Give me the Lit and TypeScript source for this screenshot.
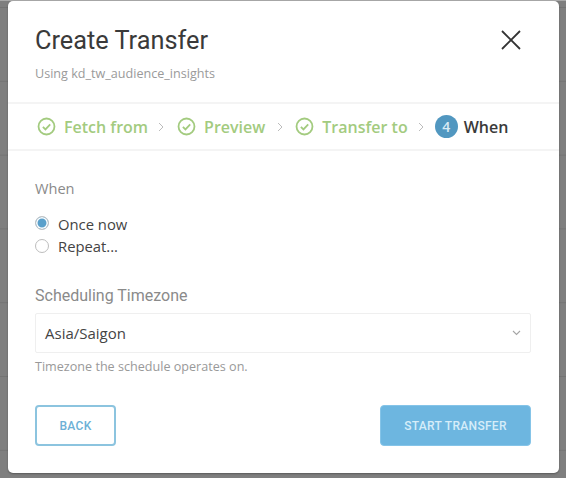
import { LitElement, html, css } from "lit";
import { customElement } from "lit/decorators.js";

const check = html`<svg class="ck" viewBox="0 0 20 20" width="19" height="19"><circle cx="10" cy="10" r="8.4" fill="none" stroke="#a3cb7f" stroke-width="1.9"/><path d="M6.2 10.3l2.7 2.7 5-5.2" fill="none" stroke="#a3cb7f" stroke-width="1.9"/></svg>`;
const chevron = html`<svg viewBox="0 0 6 10" width="6" height="10"><path d="M1 1l4 4-4 4" fill="none" stroke="#bcbcbc" stroke-width="1"/></svg>`;

@customElement("app-root")
export class AppRoot extends LitElement {
  static styles = css`
    :host { display: block; width: 566px; height: 478px; overflow: hidden; font-family: "Open Sans", sans-serif; }
    .backdrop { height: 478px; box-sizing: border-box; padding: 1px 7px 0 8px; background-color: #7f7f7f; background-image: linear-gradient(#a9a9a9 0 1px, transparent 1px), linear-gradient(#747474 0 1px, transparent 1px); background-size: auto, 100% 73.8px; background-position: 0 0, 0 7px; }
    .modal { background: #fff; height: 472px; width: 551px; border-radius: 5px; box-shadow: 0 1px 2px rgba(0,0,0,.3); display: flex; flex-direction: column; }
    .head { height: 103px; box-sizing: border-box; padding: 25px 10px 0 27px; display: flex; justify-content: space-between; align-items: flex-start; border-bottom: 2px solid #f4f4f4; }
    h1 { margin: 0; font: 400 25.3px/30px Roboto, sans-serif; color: #3a3a3a; }
    .sub { margin-top: 10px; font-size: 12.6px; line-height: 16px; color: #9a9a9a; }
    .close { margin-top: 3px; margin-right: 27px; display: block; }
    .steps { height: 47px; box-sizing: border-box; display: flex; align-items: center; padding: 0 0 0 29px; border-bottom: 2px solid #f4f4f4; font-size: 16px; font-weight: 600; color: #a3cb7f; }
    .ck { margin-right: 8px; flex: none; }
    .sep { display: flex; margin: 0 13px 0 10px; flex: none; }
    .sep.mid { margin: 0 12px 0 12px; }
    .sep.last { margin: 0 11px 0 10px; }
    .num { width: 23px; height: 23px; border-radius: 50%; background: #5197c0; color: #d8eaf5; display: flex; align-items: center; justify-content: center; font-size: 14px; font-weight: 600; margin-right: 6px; }
    .cur { color: #3a3a3a; }
    .body { padding: 28px 28px 0 27px; flex: 1; display: flex; flex-direction: column; }
    .label { font-size: 14.6px; line-height: 18px; color: #8a8a8a; }
    .label.tz { font: 400 16px/18px Roboto, sans-serif; margin-top: 31px; }
    .radios { margin-top: 17px; display: flex; flex-direction: column; gap: 2px; }
    .radio { display: flex; align-items: center; font-size: 14.8px; line-height: 20px; color: #444; gap: 9px; }
    .dot { width: 12px; height: 12px; border-radius: 50%; border: 1px solid #bdbdbd; background: #fff; }
    .dot.on { background: #5aa0cb; box-shadow: inset 0 0 0 1.5px #fff; border-color: #c4c4c4; margin-top: -2px; }
    .select { margin-top: 8px; height: 40px; box-sizing: border-box; border: 1px solid #efefef; border-radius: 2px; display: flex; justify-content: space-between; align-items: center; padding: 0 9px; font-size: 15px; color: #444; }
    .hint { margin-top: 6px; font-size: 12.6px; line-height: 16px; color: #999; }
    .btns { margin-top: 30px; display: flex; justify-content: space-between; }
    button { height: 41px; box-sizing: border-box; border-radius: 4px; font: 500 12px Roboto, sans-serif; letter-spacing: .3px; padding: 0; }
    .back { width: 81px; background: #fff; border: 2px solid #8cc4df; color: #6cb0d6; }
    .start { width: 151px; background: #6db6e0; border: 1px solid #85c4e8; color: #d6edf9; }
  `;
  render() {
    return html`<div class="backdrop"><div class="modal">
      <div class="head"><div><h1>Create Transfer</h1><div class="sub">Using kd_tw_audience_insights</div></div>
        <svg class="close" width="22" height="22" viewBox="0 0 22 22"><path d="M2 2l18 18M20 2L2 20" stroke="#333" stroke-width="1.8" fill="none"/></svg></div>
      <div class="steps">${check}Fetch from<span class="sep">${chevron}</span>${check}Preview<span class="sep mid">${chevron}</span>${check}Transfer to<span class="sep last">${chevron}</span><div class="num">4</div><span class="cur">When</span></div>
      <div class="body">
        <div class="label">When</div>
        <div class="radios"><div class="radio"><span class="dot on"></span>Once now</div><div class="radio"><span class="dot"></span>Repeat...</div></div>
        <div class="label tz">Scheduling Timezone</div>
        <div class="select">Asia/Saigon<svg width="9" height="6" viewBox="0 0 9 6"><path d="M1 1l3.5 3.5L8 1" fill="none" stroke="#a5a5a5" stroke-width="1.1"/></svg></div>
        <div class="hint">Timezone the schedule operates on.</div>
        <div class="btns"><button class="back">BACK</button><button class="start">START TRANSFER</button></div>
      </div>
    </div></div>`;
  }
}
